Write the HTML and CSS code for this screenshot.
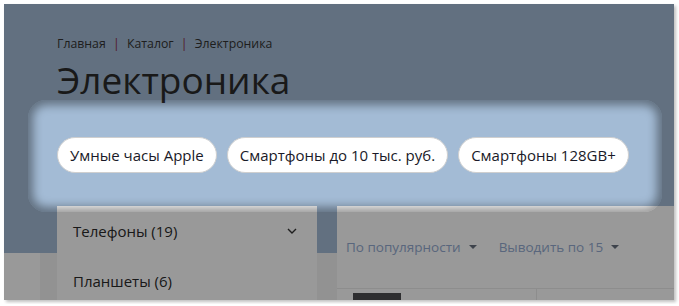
FILE: index.html
```html
<!DOCTYPE html>
<html lang="ru">
  <head>
    <meta charset="UTF-8" />
    <meta name="viewport" content="width=device-width, initial-scale=1.0" />
    <title>Электроника</title>
    <link rel="stylesheet" href="styles.css">
  </head>
  <body>
    <div class="screen">
      <div class="page">
        <div class="breadcrumbs">
          <a href="#">Главная</a>
          <span class="sep">|</span>
          <a href="#">Каталог</a>
          <span class="sep">|</span>
          <span>Электроника</span>
        </div>

        <h1>Электроника</h1>

        <div class="tags">
          <a class="tag" href="#">Умные часы Apple</a>
          <a class="tag" href="#">Смартфоны до 10 тыс. руб.</a>
          <a class="tag" href="#">Смартфоны 128GB+</a>
        </div>

        <div class="layout">
          <aside class="sidebar">
            <div class="cat-row">
              <span>Телефоны (19)</span>
              <svg class="chevron" width="10" height="6" viewBox="0 0 10 6">
                <path d="M1 1l4 4 4-4" fill="none" stroke="#333" stroke-width="1.4" />
              </svg>
            </div>
            <div class="cat-row">
              <span>Планшеты (6)</span>
            </div>
          </aside>

          <main class="catalog">
            <div class="toolbar">
              <span class="dropdown">По популярности <i class="caret"></i></span>
              <span class="dropdown">Выводить по 15 <i class="caret"></i></span>
            </div>
            <div class="grid">
              <div class="card"><div class="thumb"></div></div>
              <div class="card"></div>
            </div>
          </main>
        </div>
      </div>

      <!-- onboarding spotlight over the tag list -->
      <div class="spotlight"></div>
    </div>
  </body>
</html>
```

FILE: styles.css
```css
body {
  margin: 0;
  background: #fff;
  font-family: "Open Sans", "Noto Sans", sans-serif;
}

.screen {
  position: relative;
  width: 670px;
  height: 296px;
  margin: 4px;
  overflow: hidden;
  box-shadow: 2px 2px 3px rgba(0, 0, 0, 0.25);
}

.page {
  height: 100%;
  padding-left: 53px;
  padding-top: 31px;
  box-sizing: border-box;
  background: linear-gradient(#a3bbd5 0 249px, #ffffff 249px);
}

.breadcrumbs {
  font-size: 12.3px;
  line-height: 18px;
  color: #333;
}

.breadcrumbs a {
  color: #333;
  text-decoration: none;
}

.breadcrumbs .sep {
  color: #8a2a45;
  margin: 0 4px;
}

h1 {
  margin: 4px 0 0;
  font-size: 37px;
  font-weight: 400;
  line-height: 46px;
  color: #2b2b2b;
}

.tags {
  display: flex;
  gap: 10px;
  margin-top: 34px;
}

.tag {
  display: block;
  height: 36px;
  line-height: 34px;
  padding: 0 12px;
  box-sizing: border-box;
  border: 1px solid #cfcfcf;
  border-radius: 18px;
  background: #fff;
  color: #1a1a28;
  font-size: 15px;
  text-decoration: none;
  white-space: nowrap;
}

.layout {
  display: flex;
  gap: 20px;
  margin-top: 33px;
  margin-left: -17px;
  padding-left: 17px;
  background: linear-gradient(transparent 0 47px, #f4f4f4 47px);
}

.sidebar {
  width: 260px;
  flex: none;
  background: #fff;
}

.cat-row {
  display: flex;
  align-items: center;
  justify-content: space-between;
  height: 50px;
  padding: 0 20px 0 16px;
  font-size: 15px;
  color: #2b2b2b;
}

.catalog {
  width: 400px;
  flex: none;
  background: #fff;
}

.toolbar {
  display: flex;
  align-items: center;
  gap: 22px;
  height: 82px;
  padding-left: 9px;
  border-bottom: 1px solid #ececec;
}

.dropdown {
  display: flex;
  align-items: center;
  gap: 8px;
  font-size: 13.5px;
  color: #94abd0;
}

.caret {
  width: 0;
  height: 0;
  border-left: 4px solid transparent;
  border-right: 4px solid transparent;
  border-top: 4px solid #68717f;
}

.grid {
  display: flex;
}

.card {
  width: 260px;
  height: 40px;
  padding: 4px 0 0 16px;
  border-right: 1px solid #ececec;
}

.thumb {
  width: 48px;
  height: 30px;
  background: #4d4d50;
}

.spotlight {
  position: absolute;
  left: 24px;
  top: 96px;
  width: 634px;
  height: 112px;
  border-radius: 18px;
  box-shadow: inset 0 0 10px 5px rgba(0, 0, 0, 0.4),
    0 0 0 1000px rgba(0, 0, 0, 0.4);
}
```
